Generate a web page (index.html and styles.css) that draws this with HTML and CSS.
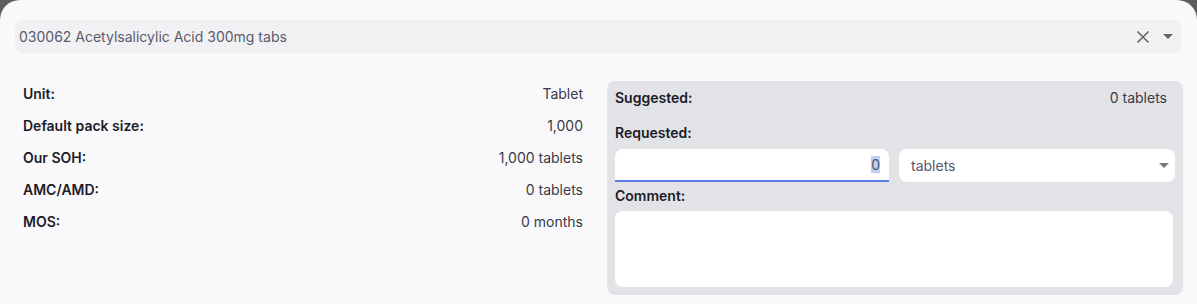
FILE: index.html
```html
<!DOCTYPE html>
<html lang="en">
<head>
    <meta charset="UTF-8">
    <meta name="viewport" content="width=device-width, initial-scale=1.0">
    <title>Request line</title>
    <link rel="stylesheet" href="styles.css">
</head>
<body>
    <div class="modal">
        <!-- Item search -->
        <div class="search">
            <span class="search-text">030062 Acetylsalicylic Acid 300mg tabs</span>
            <svg class="clear" width="14" height="14" viewBox="0 0 14 14">
                <path d="M1.5 1.5 L12.5 12.5 M12.5 1.5 L1.5 12.5" stroke="#666" stroke-width="1.6" fill="none"/>
            </svg>
            <svg class="caret" width="10" height="5" viewBox="0 0 10 5">
                <path d="M0 0 H10 L5 5 Z" fill="#666"/>
            </svg>
        </div>

        <div class="content">
            <!-- Item details -->
            <div class="details">
                <div class="row"><span class="label">Unit:</span><span class="value">Tablet</span></div>
                <div class="row"><span class="label">Default pack size:</span><span class="value">1,000</span></div>
                <div class="row"><span class="label">Our SOH:</span><span class="value">1,000 tablets</span></div>
                <div class="row"><span class="label">AMC/AMD:</span><span class="value">0 tablets</span></div>
                <div class="row"><span class="label">MOS:</span><span class="value">0 months</span></div>
            </div>

            <!-- Request panel -->
            <div class="panel">
                <div class="row suggested"><span class="label">Suggested:</span><span class="value">0 tablets</span></div>
                <div class="field-label requested">Requested:</div>
                <div class="inputs">
                    <div class="num-input"><span class="selected">0</span></div>
                    <div class="select">
                        <span>tablets</span>
                        <svg width="10" height="5" viewBox="0 0 10 5"><path d="M0 0 H10 L5 5 Z" fill="#777"/></svg>
                    </div>
                </div>
                <div class="field-label comment">Comment:</div>
                <div class="textarea"></div>
            </div>
        </div>
    </div>
</body>
</html>
```

FILE: styles.css
```css
/* General */
body {
    margin: 0;
    background: #5e5e5e;
    font-family: 'Inter', 'Liberation Sans', sans-serif;
    overflow: hidden;
}

.modal {
    background: #f9f9fb;
    border-radius: 20px 20px 0 0;
    height: 100vh;
    padding-top: 20px;
    box-sizing: border-box;
}

/* Search bar */
.search {
    display: flex;
    align-items: center;
    height: 33px;
    margin: 0 16px 0 15px;
    padding: 0 8px 0 4px;
    background: #f1f1f4;
    border-radius: 8px;
}

.search-text {
    flex: 1;
    font-size: 14px;
    color: #5a5a6c;
}

.search .clear {
    margin-right: 13px;
}

/* Content */
.content {
    display: grid;
    grid-template-columns: 560px 1fr;
    gap: 24px;
    padding: 0 14px 0 23px;
    margin-top: 24px;
}

.row {
    display: flex;
    justify-content: space-between;
    align-items: center;
    height: 32px;
    font-size: 14px;
}

.label {
    font-weight: 600;
    color: #1c1c28;
}

.value {
    color: #3a3a48;
}

/* Request panel */
.panel {
    margin-top: 4px;
    background: #e2e3e7;
    border-radius: 8px;
    padding: 0 8px 8px;
}

.panel .suggested {
    padding-right: 8px;
}

.field-label {
    font-size: 14px;
    font-weight: 600;
    color: #1c1c28;
    line-height: 16px;
}

.requested {
    padding: 12px 0 8px;
}

.comment {
    padding: 6px 0 7px;
}

.inputs {
    display: grid;
    grid-template-columns: 274px 1fr;
    gap: 10px;
}

.num-input {
    height: 31px;
    background: #fff;
    border-radius: 8px 8px 0 0;
    border-bottom: 2px solid #5b7be6;
    display: flex;
    align-items: center;
    justify-content: flex-end;
    padding-right: 9px;
    font-size: 14px;
    color: #55556a;
}

.selected {
    background: #bcd2f6;
}

.select {
    height: 33px;
    background: #fff;
    border-radius: 8px;
    display: flex;
    align-items: center;
    justify-content: space-between;
    padding: 0 6px 0 12px;
    font-size: 14px;
    color: #55556a;
}

.textarea {
    height: 76px;
    margin-right: 2px;
    background: #fff;
    border-radius: 8px;
}
```
